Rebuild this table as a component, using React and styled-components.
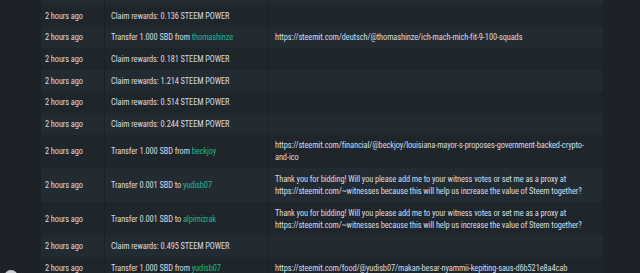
import React from 'react';
import styled, { createGlobalStyle } from 'styled-components';

const GlobalStyle = createGlobalStyle`
  html, body {
    margin: 0;
    padding: 0;
    background: #1c2228;
    overflow: hidden;
  }
  body {
    font-family: Roboto, "Liberation Sans", sans-serif;
    font-stretch: 75%;
  }
`;

const Page = styled.div`
  width: 640px;
  height: 273px;
  overflow: hidden;
  background: #1c2228;
`;

const Table = styled.div`
  display: grid;
  grid-template-columns: 63px 164px 335px;
  margin: -16.6px 0 0 41px;
  width: 562px;
`;

const Row = styled.div`
  display: contents;
  & > div {
    background: ${p => (p.$alt ? '#232b32' : '#1e252b')};
  }
`;

const Cell = styled.div`
  padding: 4.8px 6px;
  font-size: 8.4px;
  letter-spacing: -0.1px;
  line-height: 12px;
  color: #d6dce1;
  display: flex;
  align-items: center;
  white-space: nowrap;
  border-left: ${p => (p.$first ? 'none' : '1px solid #1a2026')};
  padding-left: ${p => (p.$first ? '4px' : '6px')};
`;

const Memo = styled(Cell)`
  display: block;
  white-space: normal;
  overflow-wrap: break-word;
`;

const Account = styled.span`
  color: #1fb889;
`;

const FloatButton = styled.div`
  position: fixed;
  left: 4px;
  top: 270px;
  width: 14px;
  height: 14px;
  border-radius: 50%;
  background: #c9ced3;
`;

const witness =
  'Thank you for bidding! Will you please add me to your witness votes or set me as a proxy at https://steemit.com/~witnesses because this will help us increase the value of Steem together?';

const rows = [
  { text: 'Claim rewards: 0.128 STEEM POWER' },
  { text: 'Claim rewards: 0.136 STEEM POWER' },
  { text: 'Transfer 1.000 SBD from', acc: 'thomashinze', memo: 'https://steemit.com/deutsch/@thomashinze/ich-mach-mich-fit-9-100-squads' },
  { text: 'Claim rewards: 0.181 STEEM POWER' },
  { text: 'Claim rewards: 1.214 STEEM POWER' },
  { text: 'Claim rewards: 0.514 STEEM POWER' },
  { text: 'Claim rewards: 0.244 STEEM POWER' },
  { text: 'Transfer 1.000 SBD from', acc: 'beckjoy', memo: 'https://steemit.com/financial/@beckjoy/louisiana-mayor-s-proposes-government-backed-crypto-and-ico' },
  { text: 'Transfer 0.001 SBD to', acc: 'yudisb07', memo: witness },
  { text: 'Transfer 0.001 SBD to', acc: 'alpimizrak', memo: witness },
  { text: 'Claim rewards: 0.495 STEEM POWER' },
  { text: 'Transfer 1.000 SBD from', acc: 'yudisb07', memo: 'https://steemit.com/food/@yudisb07/makan-besar-nyammii-kepiting-saus-d6b521e8a4cab' },
];

export default function App() {
  return (
    <Page>
      <GlobalStyle />
      <Table>
        {rows.map((r, i) => (
          <Row key={i} $alt={i % 2 === 0}>
            <Cell $first>2 hours ago</Cell>
            <Cell>
              <span>
                {r.text}
                {r.acc && <> <Account>{r.acc}</Account></>}
              </span>
            </Cell>
            <Memo>{r.memo}</Memo>
          </Row>
        ))}
      </Table>
      <FloatButton />
    </Page>
  );
}
